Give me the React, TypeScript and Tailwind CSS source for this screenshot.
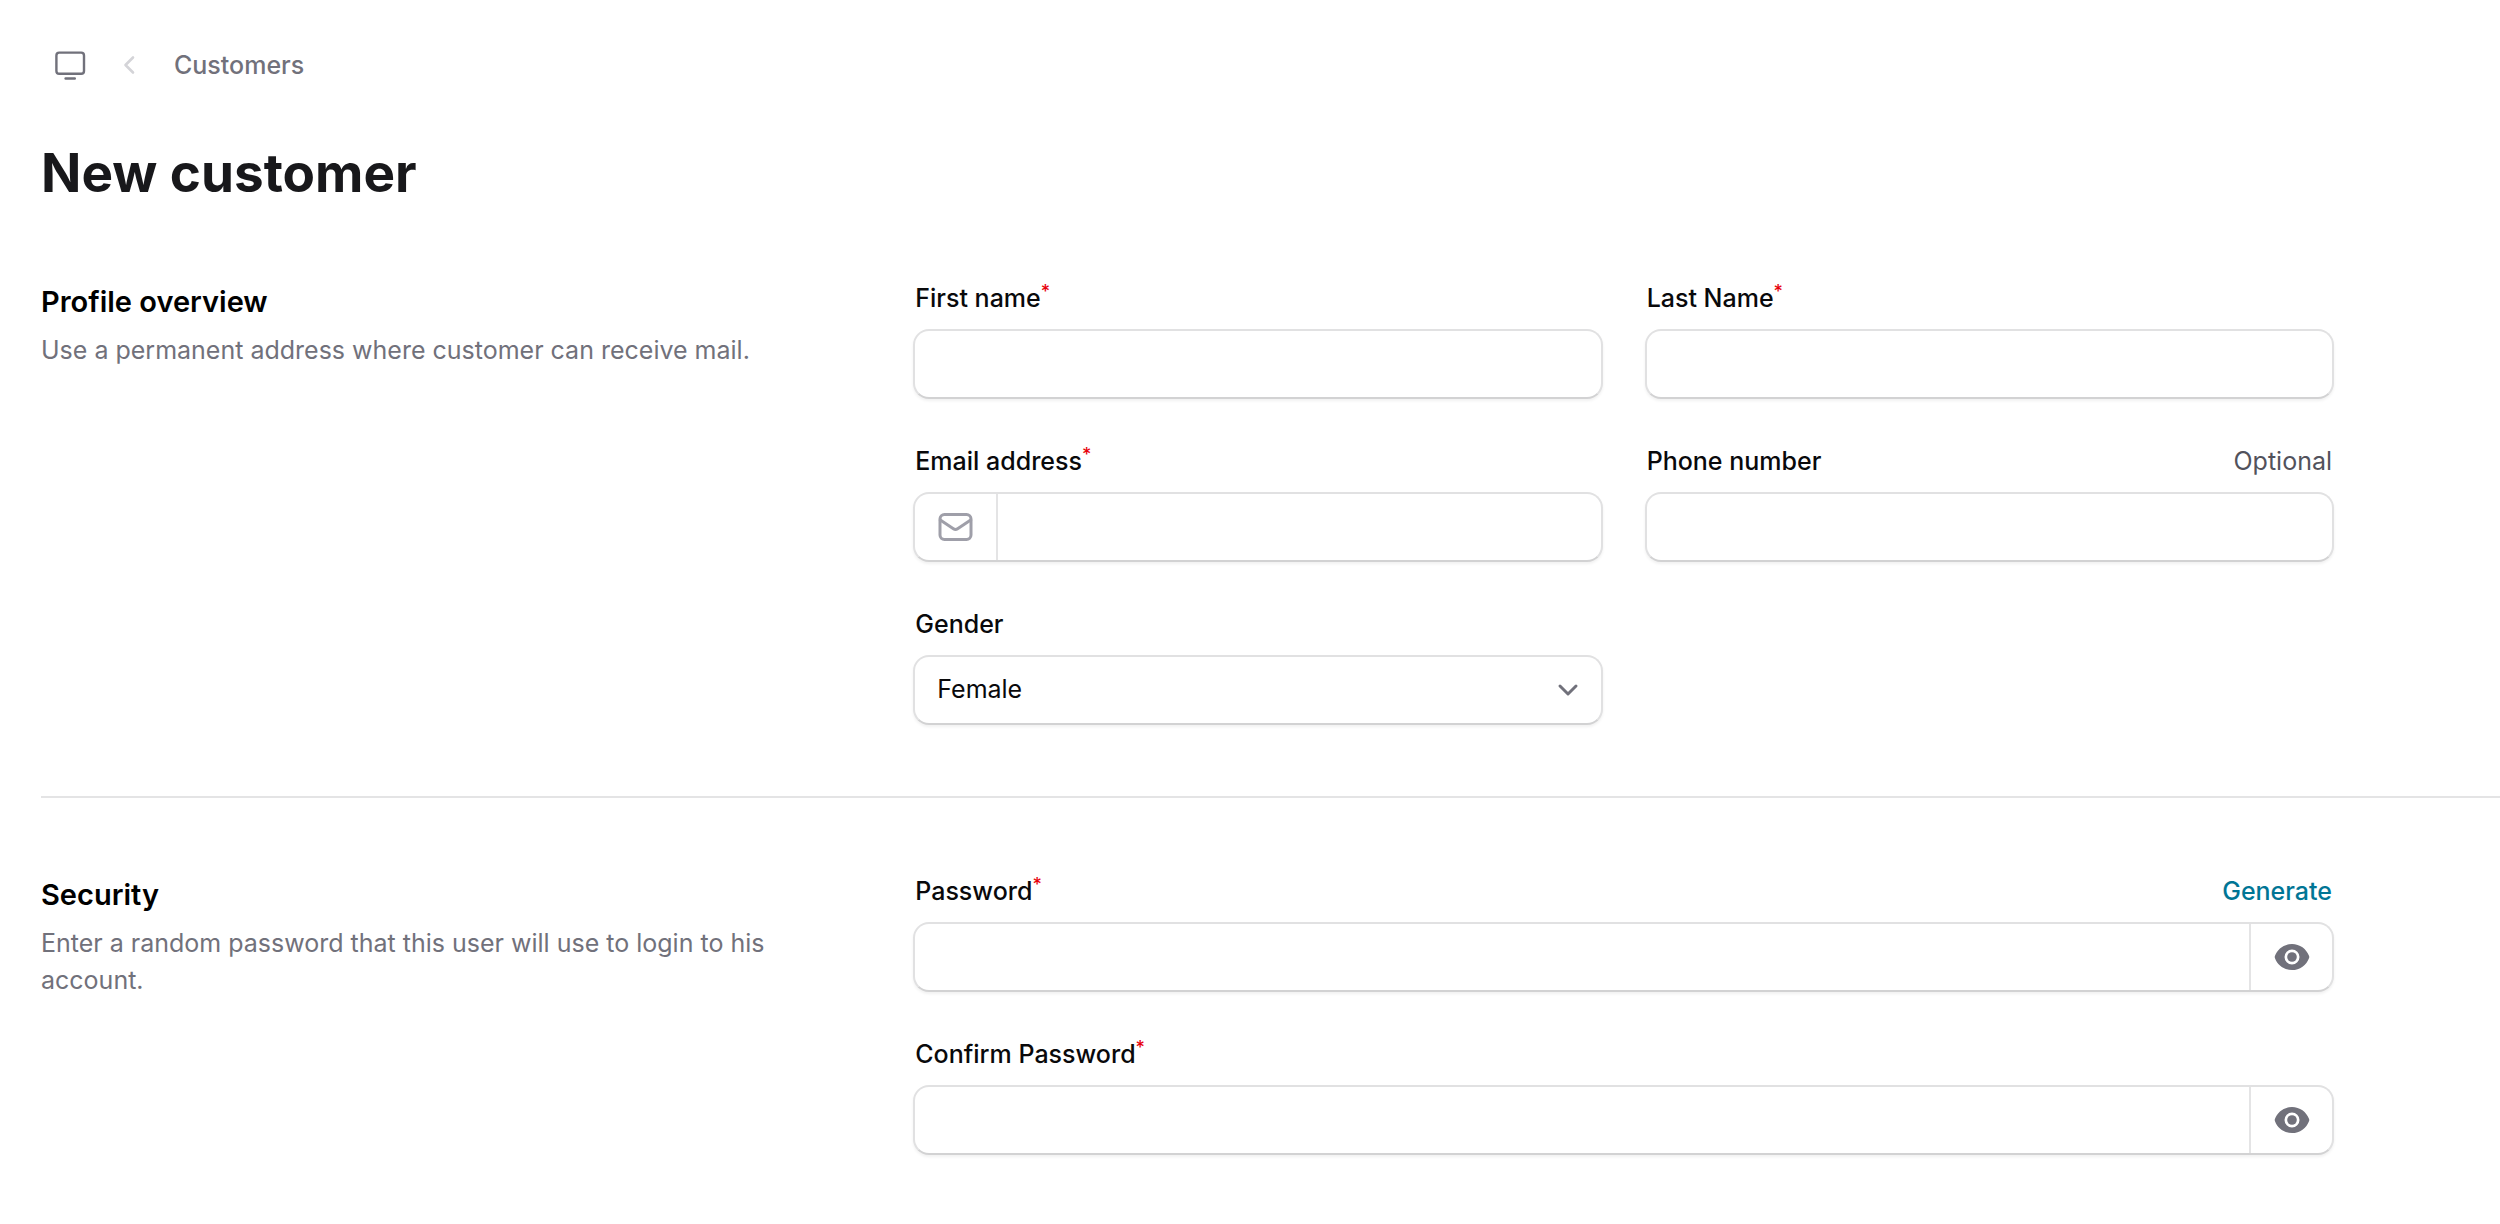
import { useState } from "react";
import type { ReactNode } from "react";

const fieldBox =
  "flex h-[70px] w-full overflow-hidden rounded-[16px] border-2 border-[#e1e1e2] border-b-[#d2d2d3] bg-white shadow-[0_2px_3px_rgba(0,0,0,0.06)] focus-within:border-cyan-700";
const inputStyle = "h-full min-w-0 flex-1 bg-transparent px-[22px] text-[25px] text-zinc-950 outline-none";

function MonitorIcon() {
  return (
    <svg aria-hidden="true" className="h-8 w-8" viewBox="0 0 32 32" fill="none" stroke="currentColor" strokeWidth="2.4" strokeLinecap="round">
      <rect x="2.4" y="3.6" width="27.6" height="21.2" rx="2.8" />
      <path d="M11.6 29.5h9.2" />
    </svg>
  );
}

function CrumbIcon() {
  return (
    <svg aria-hidden="true" className="h-8 w-8" viewBox="0 0 32 32" fill="none" stroke="currentColor" strokeWidth="2.6" strokeLinecap="round" strokeLinejoin="round">
      <path d="M19 8.500 11.500 16l7.500 7.500" />
    </svg>
  );
}

function MailIcon() {
  return (
    <svg aria-hidden="true" className="h-9 w-9" viewBox="0 0 36 36" fill="none" stroke="currentColor" strokeWidth="3" strokeLinecap="round" strokeLinejoin="round">
      <rect x="2" y="5.500" width="31" height="25" rx="4.500" />
      <path d="M2.300 11 15.400 19.700a3.600 3.600 0 0 0 4.200 0L32.700 11" />
    </svg>
  );
}

function EyeIcon() {
  return (
    <svg aria-hidden="true" className="h-9 w-9" viewBox="0 0 36 36" fill="currentColor">
      <path
        fillRule="evenodd"
        d="M.9 17.1C3.5 9.9 10.2 5 18 5s14.5 4.9 17.1 12.1c.2.6.2 1.2 0 1.8C32.5 26.1 25.8 31 18 31S3.5 26.1.9 18.9c-.2-.6-.2-1.2 0-1.8ZM18 25.5a7.500 7.500 0 1 0 0-15 7.500 7.500 0 0 0 0 15Z"
      />
      <circle cx="18" cy="18" r="4.8" />
    </svg>
  );
}

function Section({ title, text, children }: { title: string; text: string; children: ReactNode }) {
  return (
    <section className="grid gap-x-[83px] gap-y-10 pr-10 lg:grid-cols-[5fr_9fr] lg:pr-[166px]">
      <div>
        <h2 className="text-[29px] leading-[46px] font-semibold text-black">{title}</h2>
        <p className="mt-[7px] text-[25px] leading-[37px] text-zinc-500">{text}</p>
      </div>
      {children}
    </section>
  );
}

type FieldProps = {
  id: string;
  label: string;
  required?: boolean;
  hint?: ReactNode;
  children: ReactNode;
};

function Field({ id, label, required, hint, children }: FieldProps) {
  return (
    <div className="flex flex-col gap-3">
      <div className="flex justify-between px-0.5 text-[25px] leading-[38px]">
        <label htmlFor={id} className="flex font-medium text-zinc-950">
          {label}
          {required && <span className="text-[18px] leading-[26px] text-red-600">*</span>}
        </label>
        {hint}
      </div>
      {children}
    </div>
  );
}

function PasswordInput({ id }: { id: string }) {
  const [visible, setVisible] = useState(false);

  return (
    <div className={fieldBox}>
      <input id={id} type={visible ? "text" : "password"} className={inputStyle} />
      <button
        type="button"
        aria-label="Toggle password visibility"
        onClick={() => setVisible(!visible)}
        className="flex w-[83px] items-center justify-center border-l-2 border-[#e4e4e5] text-zinc-500"
      >
        <EyeIcon />
      </button>
    </div>
  );
}

export default function App() {
  return (
    <main className="min-h-screen bg-white pb-[60px] pl-[41px] font-['Inter',sans-serif] text-zinc-950">
      <nav aria-label="Breadcrumb" className="flex items-center pt-[46px] pl-[13px] text-[25px] leading-[38px] font-medium text-zinc-500">
        <a href="#" aria-label="Dashboard">
          <MonitorIcon />
        </a>
        <span className="mx-7 text-zinc-300">
          <CrumbIcon />
        </span>
        <a href="#">Customers</a>
      </nav>

      <h1 className="mt-[52px] text-[53px] leading-[74px] font-bold text-zinc-900">New customer</h1>

      <form className="mt-[69px]">
        <Section title="Profile overview" text="Use a permanent address where customer can receive mail.">
          <div className="grid gap-x-[42px] gap-y-[43px] md:grid-cols-2">
            <Field id="first-name" label="First name" required>
              <div className={fieldBox}>
                <input id="first-name" type="text" className={inputStyle} />
              </div>
            </Field>
            <Field id="last-name" label="Last Name" required>
              <div className={fieldBox}>
                <input id="last-name" type="text" className={inputStyle} />
              </div>
            </Field>
            <Field id="email" label="Email address" required>
              <div className={fieldBox}>
                <span className="flex w-[83px] items-center justify-center border-r-2 border-[#e4e4e5] text-zinc-400">
                  <MailIcon />
                </span>
                <input id="email" type="email" className={inputStyle} />
              </div>
            </Field>
            <Field id="phone" label="Phone number" hint={<span className="text-zinc-600">Optional</span>}>
              <div className={fieldBox}>
                <input id="phone" type="tel" className={inputStyle} />
              </div>
            </Field>
            <Field id="gender" label="Gender">
              <div className={`${fieldBox} relative`}>
                <select id="gender" defaultValue="female" className={`${inputStyle} appearance-none`}>
                  <option value="female">Female</option>
                  <option value="male">Male</option>
                </select>
                <svg aria-hidden="true" className="pointer-events-none absolute top-[17px] right-[17px] h-8 w-8 text-zinc-500" viewBox="0 0 32 32" fill="none" stroke="currentColor" strokeWidth="3" strokeLinecap="round" strokeLinejoin="round">
                  <path d="m8 12 8 8 8-8" />
                </svg>
              </div>
            </Field>
          </div>
        </Section>

        <hr className="mt-[71px] mb-[74px] border-t-2 border-[#e4e4e5]" />

        <Section title="Security" text="Enter a random password that this user will use to login to his account.">
          <div className="flex flex-col gap-[43px]">
            <Field
              id="password"
              label="Password"
              required
              hint={
                <button type="button" className="font-medium text-cyan-700">
                  Generate
                </button>
              }
            >
              <PasswordInput id="password" />
            </Field>
            <Field id="confirm-password" label="Confirm Password" required>
              <PasswordInput id="confirm-password" />
            </Field>
          </div>
        </Section>
      </form>
    </main>
  );
}
